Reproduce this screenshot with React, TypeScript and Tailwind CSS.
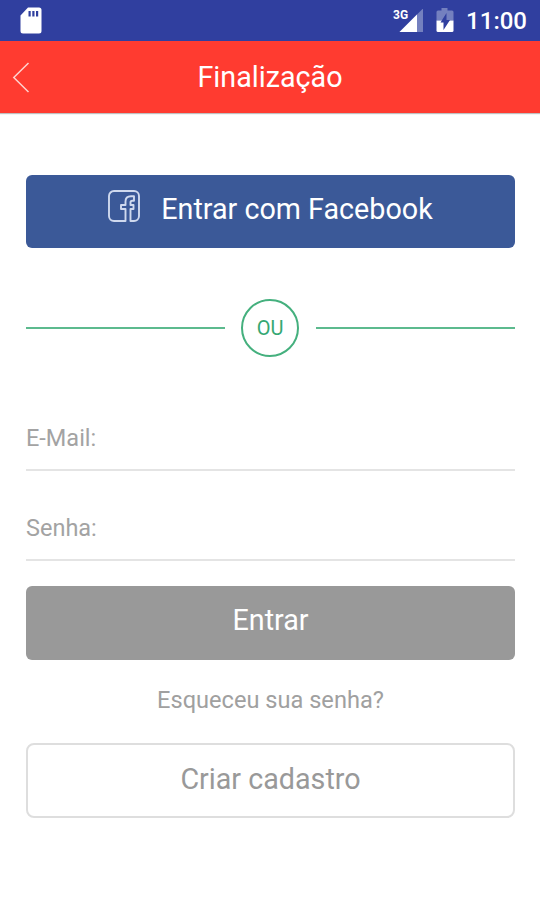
import React from 'react';

interface FieldProps {
  label: string;
  type: string;
}

const StatusBar: React.FC = () => (
  <div className="flex h-[41px] items-start justify-between bg-[#303f9f] pl-5 pr-[13px] text-white">
    <svg className="mt-[7px] h-7 w-[22px]" viewBox="0 0 22 28">
      <path
        fillRule="evenodd"
        fill="#fff"
        d="M8 .5h11a2.500 2.500 0 0 1 2.500 2.500v21a2.500 2.500 0 0 1-2.500 2.500H3A2.500 2.500 0 0 1 .5 24V8.500zM8.500 4v5.500h2.200V4zM12.300 4v5.500h2.200V4zM16 4v5.500h2.200V4z"
      />
    </svg>
    <div className="flex items-start">
      <div className="relative mr-[13px] h-[41px] w-[30px]">
        <svg className="h-[41px] w-[30px]" viewBox="0 0 30 41">
          <path d="M30.500 8V32H6.500z" fill="#7480bf" />
          <path d="M24 14.500V32H6.500z" fill="#fff" />
        </svg>
        <span className="absolute left-0 top-[8px] text-[12px] font-bold leading-[14px]">3G</span>
      </div>
      <svg className="mr-[12px] h-[41px] w-[18px]" viewBox="0 0 18 41">
        <path d="M5.500 8h6v2.500h4.500a1.500 1.500 0 0 1 1.500 1.500v8.500H.5V12A1.500 1.500 0 0 1 2 10.500h3.500z" fill="#7480bf" />
        <path d="M.5 20.500h17v10A1.500 1.500 0 0 1 16 32H2a1.500 1.500 0 0 1-1.500-1.500z" fill="#fff" />
        <path d="M10.500 13 4.500 22.500h3V30l6.500-10h-3.500z" fill="#303f9f" />
      </svg>
      <span className="mt-[7px] text-[24px] font-medium leading-[29px]">11:00</span>
    </div>
  </div>
);

const Header: React.FC = () => (
  <header className="relative flex h-[72px] items-center justify-center bg-[#ff3b30] shadow-[0_1px_1px_rgba(0,0,0,0.25)]">
    <button className="absolute left-3 top-[21px]" aria-label="Voltar">
      <svg className="h-[31px] w-[18px]" viewBox="0 0 18 31" fill="none" stroke="#ffd2ce" strokeWidth="1.5">
        <path d="M16.500 1 1.800 15.500 16.500 30" />
      </svg>
    </button>
    <h1 className="text-[28.700px] leading-9 text-white">Finalização</h1>
  </header>
);

const FacebookIcon: React.FC = () => (
  <svg className="h-8 w-8" viewBox="0 0 32 32" fill="none" stroke="#cfd9ee" strokeWidth="1.9" strokeLinejoin="round">
    <path d="M17.500 31H6a5 5 0 0 1-5-5V6a5 5 0 0 1 5-5h20a5 5 0 0 1 5 5v20a5 5 0 0 1-5 5h-3.500V19h3v-4h-3v-2.500c0-1.300.5-1.800 1.700-1.800h1.800V6.300h-3c-3.600 0-5.500 2-5.500 5.200V15h-4.500v4h4.500z" />
  </svg>
);

const Field: React.FC<FieldProps> = ({ label, type }) => (
  <input
    type={type}
    placeholder={label}
    className="block h-[66px] w-full border-b-2 border-[#e4e4e4] pt-[2px] text-[23.500px] leading-7 outline-none placeholder:text-[#a3a3a3]"
  />
);

export default function App() {
  return (
    <div className="h-[900px] w-[540px] overflow-hidden bg-white font-['Roboto',sans-serif]">
      <StatusBar />
      <Header />
      <main className="flex flex-col pl-[26px] pr-[25px] pt-[62px]">
        <button className="flex h-[73px] items-center justify-center rounded-[6px] bg-[#3b5998] pb-[6px] text-[28.700px] leading-9 text-white">
          <span className="mb-[5px] mr-[21px]">
            <FacebookIcon />
          </span>
          Entrar com Facebook
        </button>

        <div className="mt-[51px] flex items-center">
          <div className="h-[2px] w-[199px] bg-[#5cba8e]" />
          <div className="ml-4 mr-[17px] flex h-[58px] w-[58px] items-center justify-center rounded-full border-2 border-[#45b07e] text-[20px] text-[#35a873]">
            OU
          </div>
          <div className="h-[2px] flex-1 bg-[#5cba8e]" />
        </div>

        <form className="mt-[48px] flex flex-col gap-6">
          <Field label="E-Mail:" type="email" />
          <Field label="Senha:" type="password" />
        </form>

        <button className="mt-[25px] h-[74px] rounded-[6px] bg-[#999999] pb-[6px] text-[28.700px] leading-9 text-white">
          Entrar
        </button>
        <a className="mt-[26px] text-center text-[23.600px] leading-7 text-[#a0a0a0]">Esqueceu sua senha?</a>
        <button className="mt-[29px] h-[75px] rounded-[8px] border-2 border-[#dedede] pb-[3px] text-[28.700px] leading-9 text-[#999999]">
          Criar cadastro
        </button>
      </main>
    </div>
  );
}
